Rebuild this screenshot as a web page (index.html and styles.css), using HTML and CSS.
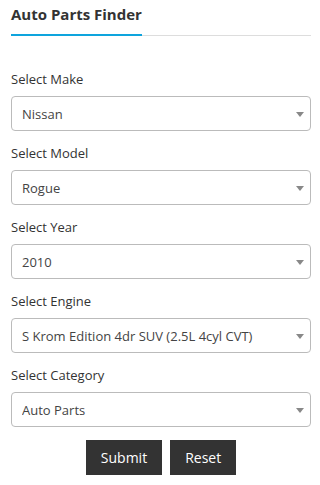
FILE: index.html
```html
<!DOCTYPE html>
<html lang="en">
<head>
    <meta charset="UTF-8">
    <meta name="viewport" content="width=device-width, initial-scale=1.0">
    <title>Auto Parts Finder</title>
    <link rel="stylesheet" href="styles.css">
</head>
<body>
    <div class="finder">
        <h2 class="finder-title"><span>Auto Parts Finder</span></h2>

        <form class="finder-form">
            <div class="field">
                <label for="make">Select Make</label>
                <div class="select-wrap">
                    <select id="make"><option>Nissan</option></select>
                </div>
            </div>
            <div class="field">
                <label for="model">Select Model</label>
                <div class="select-wrap">
                    <select id="model"><option>Rogue</option></select>
                </div>
            </div>
            <div class="field">
                <label for="year">Select Year</label>
                <div class="select-wrap">
                    <select id="year"><option>2010</option></select>
                </div>
            </div>
            <div class="field">
                <label for="engine">Select Engine</label>
                <div class="select-wrap">
                    <select id="engine"><option>S Krom Edition 4dr SUV (2.5L 4cyl CVT)</option></select>
                </div>
            </div>
            <div class="field">
                <label for="category">Select Category</label>
                <div class="select-wrap">
                    <select id="category"><option>Auto Parts</option></select>
                </div>
            </div>

            <div class="buttons">
                <button type="submit">Submit</button>
                <button type="reset">Reset</button>
            </div>
        </form>
    </div>
</body>
</html>
```

FILE: styles.css
```css
body {
    font-family: "Open Sans", Arial, sans-serif;
    margin: 0;
    padding: 4px 0 0;
    background-color: #fff;
    color: #333;
}
.finder {
    width: 300px;
    margin-left: 11px;
}
.finder-title {
    display: flex;
    margin: 0 0 34px;
    border-bottom: 1px solid #ddd;
    font-size: 15px;
    line-height: 20px;
    font-weight: bold;
    color: #333;
}
.finder-title span {
    padding-bottom: 10px;
    border-bottom: 2px solid #0ea4dd;
    margin-bottom: -1px;
}
.field {
    margin-bottom: 13px;
}
.field label {
    display: block;
    font-size: 13px;
    line-height: 18px;
    margin-bottom: 8px;
    color: #333;
}
.select-wrap {
    position: relative;
}
.select-wrap::after {
    content: "";
    position: absolute;
    right: 7px;
    top: 16px;
    border-left: 4px solid transparent;
    border-right: 4px solid transparent;
    border-top: 5px solid #888;
    pointer-events: none;
}
select {
    -webkit-appearance: none;
    appearance: none;
    display: block;
    width: 100%;
    height: 35px;
    padding: 0 24px 0 10px;
    border: 1px solid #bbb;
    border-radius: 4px;
    background-color: #fff;
    font-family: "Open Sans", Arial, sans-serif;
    font-size: 13px;
    color: #444;
}
.buttons {
    display: flex;
    justify-content: center;
    gap: 8px;
}
.buttons button {
    height: 35px;
    padding: 0 15px;
    border: 0;
    background-color: #333;
    color: #fff;
    font-family: "Open Sans", Arial, sans-serif;
    font-size: 14px;
    cursor: pointer;
}
.buttons button:hover {
    background-color: #222;
}
```
